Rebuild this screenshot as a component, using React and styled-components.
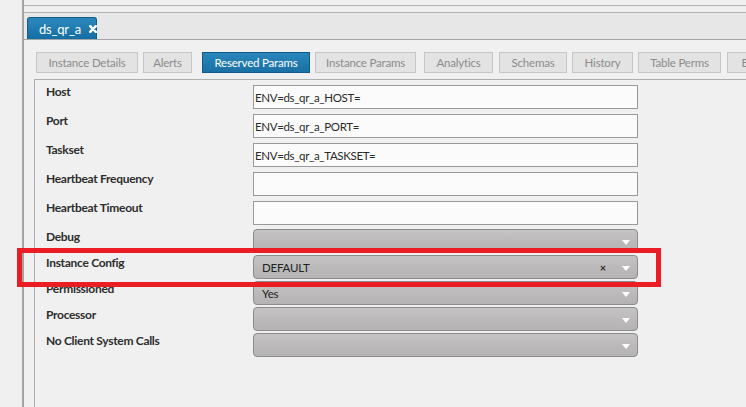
import styled, { createGlobalStyle } from 'styled-components';

const GlobalStyle = createGlobalStyle`
  html, body {
    margin: 0;
    padding: 0;
    background: #f0f0f0;
    font-family: Lato, "Open Sans", sans-serif;
  }
  * { box-sizing: border-box; }
`;

const Page = styled.div`
  position: relative;
  display: flex;
  width: 746px;
  height: 407px;
  overflow: hidden;
  background: #f0f0f0;
`;

const Gutter = styled.div`
  width: 24px;
  flex-shrink: 0;
  border-right: 2px solid #a3a3a3;
`;

const Main = styled.div`
  flex: 1;
  display: flex;
  flex-direction: column;
  min-width: 0;
`;

const TopStrip = styled.div`
  height: 6px;
  border-bottom: 1px solid #b3b3b3;
`;

const TabHeader = styled.div`
  margin-top: 6px;
  height: 28px;
  display: flex;
  align-items: flex-end;
  padding-left: 3px;
  background: #e7e7e7;
  border-top: 1px solid #b4b4b4;
  border-bottom: 1px solid #a6a6a6;
`;

const DocTab = styled.div`
  width: 70px;
  height: 22px;
  display: flex;
  align-items: center;
  gap: 8px;
  padding-left: 11px;
  color: #fff;
  font-size: 13px;
  letter-spacing: -0.2px;
  border-radius: 3px 3px 0 0;
  background: linear-gradient(#2c88bc, #156ea3);
  border: 1px solid #125d8a;
  border-bottom: none;
  svg { flex-shrink: 0; }
`;

const Body = styled.div`
  flex: 1;
  padding: 12px 0 0 10px;
  display: flex;
  flex-direction: column;
`;

const ButtonRow = styled.div`
  display: flex;
  height: 21px;
  padding-left: 2px;
  white-space: nowrap;
`;

const TabButton = styled.div`
  flex-shrink: 0;
  width: ${(p) => p.$w}px;
  margin-left: ${(p) => p.$ml}px;
  height: 21px;
  display: flex;
  align-items: center;
  justify-content: center;
  font-size: 11.5px;
  letter-spacing: -0.2px;
  color: ${(p) => (p.$active ? '#fff' : '#8c8c8c')};
  background: ${(p) => (p.$active ? 'linear-gradient(#2a86bb, #1970a4)' : '#e3e3e3')};
  border: 1px solid ${(p) => (p.$active ? '#13598a' : '#c6c6c6')};
  overflow: hidden;
`;

const Form = styled.div`
  flex: 1;
  margin-top: 6px;
  border-top: 1px solid #aeaeae;
  border-left: 1px solid #aeaeae;
  padding: 5px 0 0 11px;
`;

const Row = styled.div`
  display: flex;
  align-items: flex-start;
  margin-bottom: ${(p) => p.$mb}px;
`;

const Label = styled.div`
  width: 207px;
  flex-shrink: 0;
  font-size: 12px;
  font-weight: 700;
  letter-spacing: -0.3px;
  line-height: 16px;
  color: #2d2d2d;
  margin-top: ${(p) => p.$mt}px;
`;

const TextBox = styled.div`
  width: 385px;
  height: 24px;
  display: flex;
  align-items: center;
  padding-left: 1px;
  font-size: 11.5px;
  letter-spacing: -0.35px;
  color: #2a2a2a;
  background: #fbfbfb;
  border: 1px solid #9a9a9a;
`;

const Select = styled.div`
  position: relative;
  width: 385px;
  height: 24px;
  display: flex;
  align-items: center;
  padding-left: 8px;
  font-size: 11.5px;
  letter-spacing: -0.2px;
  color: #222;
  background: linear-gradient(#c5c3c3, #bab8b8 60%, #b5b3b3);
  border: 1px solid #8b8b8b;
  border-radius: 4px;
`;

const Clear = styled.span`
  position: absolute;
  right: 31px;
  top: 5px;
  font-size: 11px;
  font-weight: 700;
  color: #3a2323;
`;

const Caret = styled.span`
  position: absolute;
  right: 7px;
  top: 10px;
  width: 0;
  height: 0;
  border-left: 4px solid transparent;
  border-right: 4px solid transparent;
  border-top: 5px solid #fff;
`;

const Highlight = styled.div`
  position: absolute;
  left: 17px;
  top: 248px;
  width: 644px;
  height: 39px;
  border: 5px solid #ec1c24;
  pointer-events: none;
`;

const tabs = [
  { label: 'Instance Details', w: 102, ml: 0 },
  { label: 'Alerts', w: 49, ml: 5 },
  { label: 'Reserved Params', w: 108, ml: 10, active: true },
  { label: 'Instance Params', w: 101, ml: 5 },
  { label: 'Analytics', w: 69, ml: 8 },
  { label: 'Schemas', w: 68, ml: 6 },
  { label: 'History', w: 61, ml: 5 },
  { label: 'Table Perms', w: 83, ml: 5 },
  { label: 'Entitlements', w: 90, ml: 6 },
];

const inputs = [
  { label: 'Host', value: 'ENV=ds_qr_a_HOST=' },
  { label: 'Port', value: 'ENV=ds_qr_a_PORT=' },
  { label: 'Taskset', value: 'ENV=ds_qr_a_TASKSET=' },
  { label: 'Heartbeat Frequency', value: '' },
  { label: 'Heartbeat Timeout', value: '' },
];

const selects = [
  { label: 'Debug', value: '' },
  { label: 'Instance Config', value: 'DEFAULT', clearable: true },
  { label: 'Permissioned', value: 'Yes' },
  { label: 'Processor', value: '' },
  { label: 'No Client System Calls', value: '' },
];

export default function App() {
  return (
    <Page>
      <GlobalStyle />
      <Gutter />
      <Main>
        <TopStrip />
        <TabHeader>
          <DocTab>
            ds_qr_a
            <svg width="8" height="8" viewBox="0 0 8 8">
              <path d="M1.2 1.2 L6.8 6.8 M6.8 1.2 L1.2 6.8" stroke="#fff" strokeWidth="2.4" strokeLinecap="round" />
            </svg>
          </DocTab>
        </TabHeader>
        <Body>
          <ButtonRow>
            {tabs.map((t) => (
              <TabButton key={t.label} $w={t.w} $ml={t.ml} $active={t.active}>
                {t.label}
              </TabButton>
            ))}
          </ButtonRow>
          <Form>
            {inputs.map((f, i) => (
              <Row key={f.label} $mb={i === inputs.length - 1 ? 4 : 5}>
                <Label $mt={-1}>{f.label}</Label>
                <TextBox>{f.value}</TextBox>
              </Row>
            ))}
            {selects.map((f) => (
              <Row key={f.label} $mb={2}>
                <Label $mt={0}>{f.label}</Label>
                <Select>
                  {f.value}
                  {f.clearable && <Clear>×</Clear>}
                  <Caret />
                </Select>
              </Row>
            ))}
          </Form>
        </Body>
      </Main>
      <Highlight />
    </Page>
  );
}
